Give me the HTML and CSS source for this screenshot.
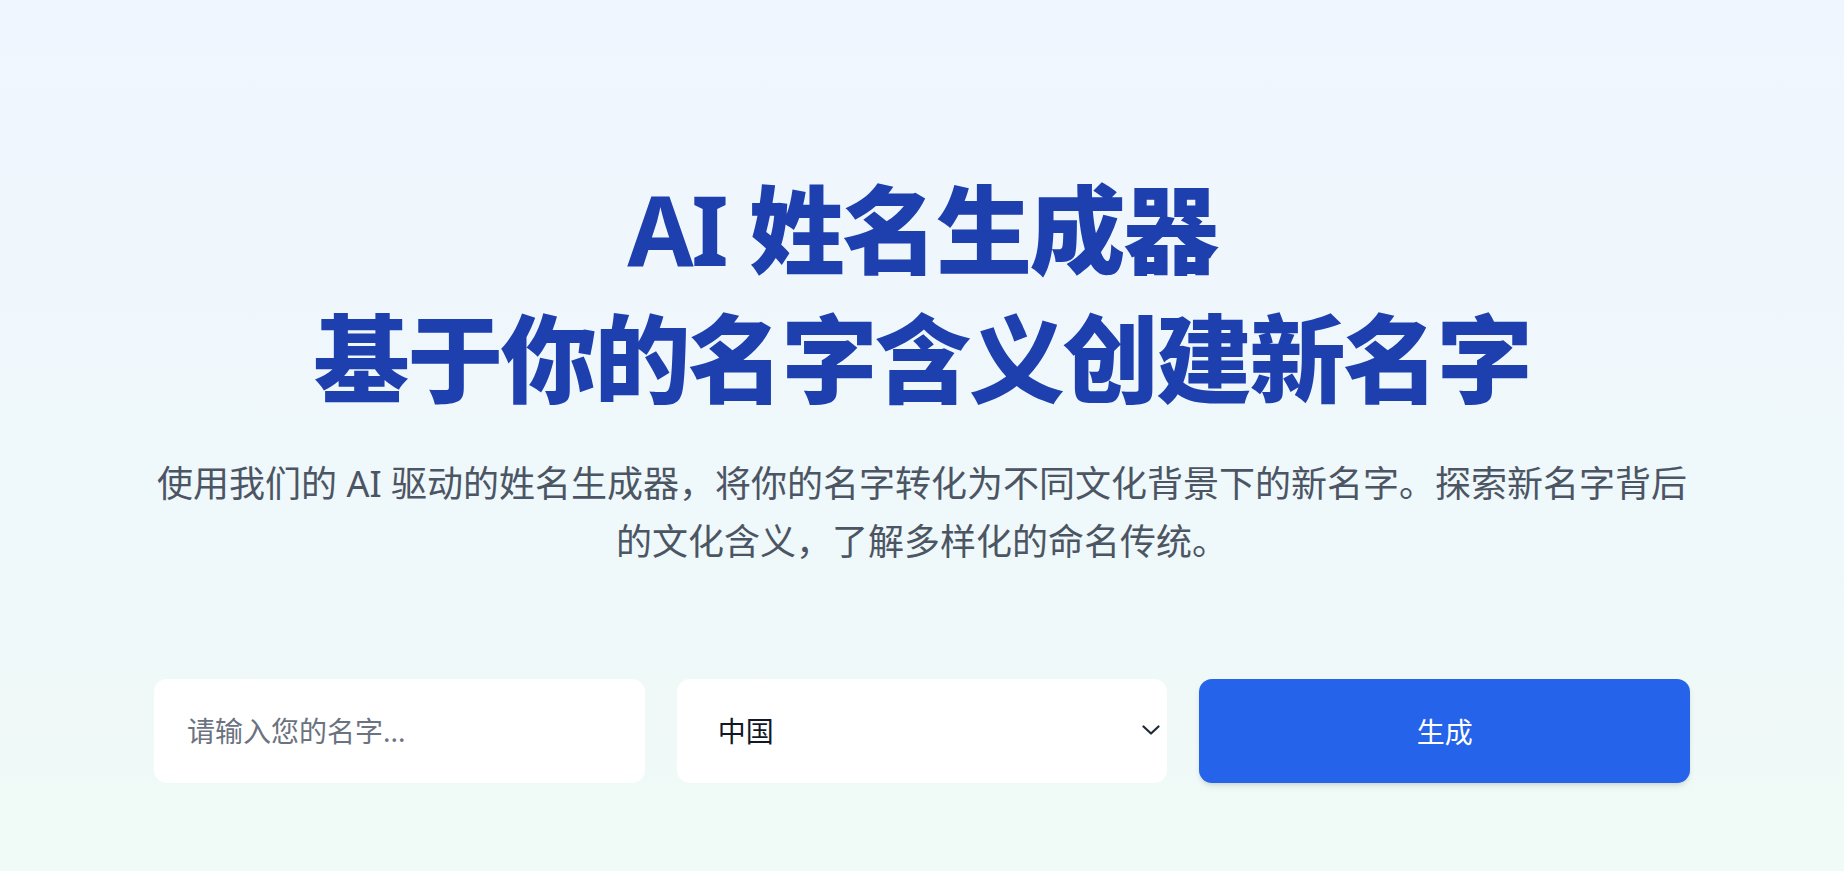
FILE: index.html
```html
<!DOCTYPE html>
<html lang="zh-CN">
<head>
<meta charset="utf-8">
<title>AI 姓名生成器</title>
<link rel="stylesheet" href="styles.css">
</head>
<body>
<main class="hero">
  <div class="container">
    <h1 class="title">
      <span class="title-line"><span class="latin">AI</span> 姓名生成器</span>
      <span class="title-line">基于你的名字含义创建新名字</span>
    </h1>
    <p class="subtitle">使用我们的 AI 驱动的姓名生成器，将你的名字转化为不同文化背景下的新名字。探索新名字背后的文化含义，了解多样化的命名传统。</p>
    <form class="form" onsubmit="return false;">
      <input class="field name-input" type="text" placeholder="请输入您的名字...">
      <div class="select-wrap">
        <select class="field culture-select">
          <option>中国</option>
          <option>日本</option>
          <option>韩国</option>
          <option>美国</option>
        </select>
        <svg class="chevron" width="18" height="10" viewBox="0 0 18 10" aria-hidden="true">
          <path d="M1.5 1.5 L9 8.5 L16.5 1.5" fill="none" stroke="#1f2937" stroke-width="2.2" stroke-linecap="round" stroke-linejoin="round"/>
        </svg>
      </div>
      <button class="btn" type="submit">生成</button>
    </form>
  </div>
</main>
</body>
</html>
```
FILE: styles.css
```css
* {
  box-sizing: border-box;
}

html, body {
  margin: 0;
  padding: 0;
}

body {
  min-height: 100vh;
  background: linear-gradient(to bottom, #eff6ff 0%, #eff8fa 60%, #f0faf6 100%);
  font-family: "Noto Sans", "Noto Sans CJK SC", sans-serif;
  color: #111827;
}

.hero {
  padding-top: 165px;
  padding-bottom: 60px;
}

.container {
  max-width: 1536px;
  margin: 0 auto;
}

.title {
  margin: 0;
  text-align: center;
  font-size: 96px;
  line-height: 128.6px;
  font-weight: 900;
  letter-spacing: -0.025em;
  color: #1e40af;
}

.title .latin {
  font-weight: 700;
}

.title-line {
  display: block;
}

.subtitle {
  margin: 33px 0 0;
  text-align: center;
  font-size: 36px;
  line-height: 58px;
  color: #4b5563;
  font-weight: 400;
}

.form {
  margin-top: 108px;
  display: grid;
  grid-template-columns: 1fr 1fr 1fr;
  gap: 32px;
}

.field {
  width: 100%;
  height: 104px;
  border: none;
  border-radius: 13px;
  background: #ffffff;
  font-family: "Noto Sans", "Noto Sans CJK SC", sans-serif;
  font-size: 28px;
  color: #111827;
  outline: none;
}

.name-input {
  padding: 0 33px;
}

.name-input::placeholder {
  color: #6b7280;
  opacity: 1;
}

.select-wrap {
  position: relative;
}

.culture-select {
  appearance: none;
  -webkit-appearance: none;
  padding: 0 60px 0 41px;
  cursor: pointer;
}

.chevron {
  position: absolute;
  right: 7px;
  top: 46px;
  pointer-events: none;
}

.btn {
  height: 104px;
  border: none;
  border-radius: 13px;
  background: #2563eb;
  color: #ffffff;
  font-family: "Noto Sans", "Noto Sans CJK SC", sans-serif;
  font-size: 28px;
  cursor: pointer;
  box-shadow: 0 4px 6px -1px rgba(0, 0, 0, 0.1), 0 2px 4px -2px rgba(0, 0, 0, 0.1);
}
```
